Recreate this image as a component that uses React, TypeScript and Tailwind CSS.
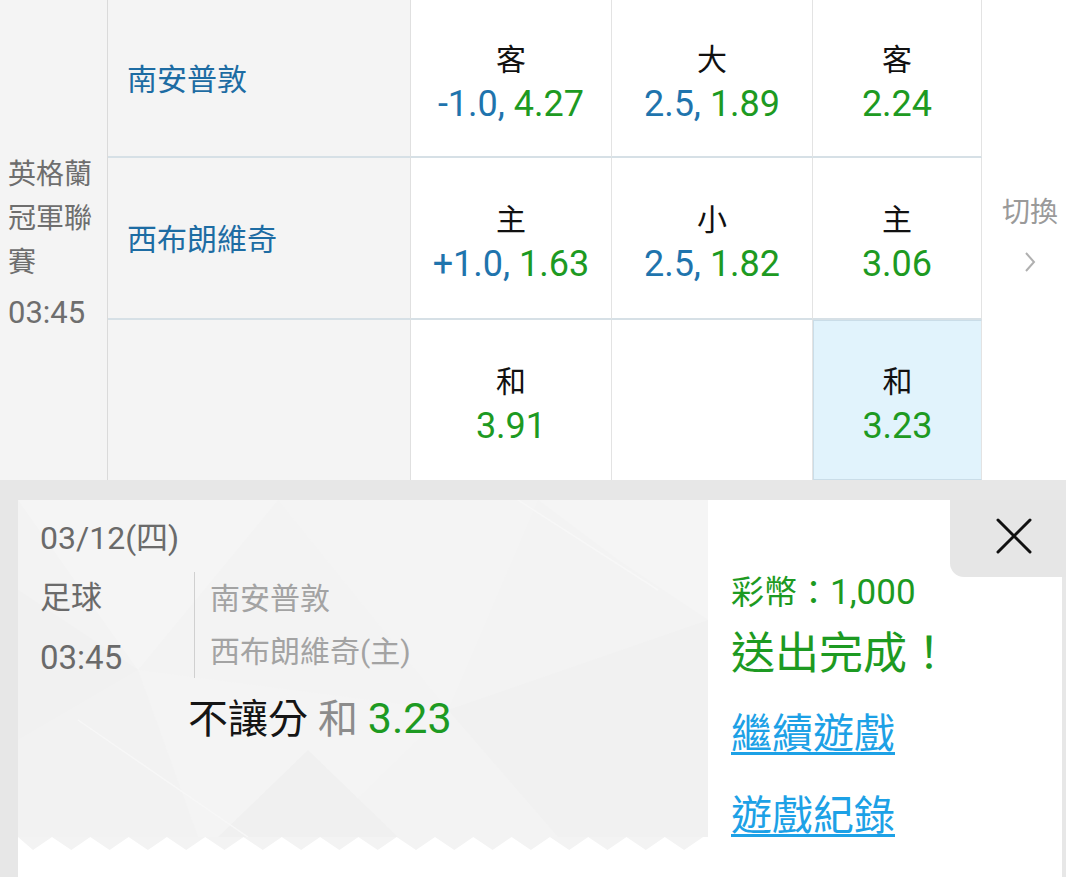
import React from "react";

const BLUE = "text-[#1f74ad]";
const GREEN = "text-[#1d9a22]";

function OddsCell({
  label,
  pre,
  val,
  className = "",
}: {
  label?: string;
  pre?: string;
  val?: string;
  className?: string;
}) {
  return (
    <div className={`flex flex-col items-center justify-center pt-[8px] border-r border-r-[#e3e3e3] ${className}`}>
      {label && <div className="text-[30px] leading-[44px] text-[#111]">{label}</div>}
      {val && (
        <div className="text-[36px] leading-[44px]">
          {pre && <span className={BLUE}>{pre} </span>}
          <span className={GREEN}>{val}</span>
        </div>
      )}
    </div>
  );
}

function Zigzag() {
  const pts: string[] = ["0,0"];
  const period = 38.3;
  for (let k = 0; k < 19; k++) {
    const v = 15 + period * k;
    const p = 34 + period * k;
    if (v <= 690) pts.push(`${v},13`);
    if (p <= 690) pts.push(`${p},0`);
  }
  pts.push("690,0");
  return (
    <svg width="690" height="14" viewBox="0 0 690 14" className="block">
      <rect x="0" y="0" width="690" height="14" fill="#ffffff" />
      <polygon points={pts.join(" ")} fill="#f3f3f3" />
    </svg>
  );
}

function TrianglePattern() {
  return (
    <svg className="absolute inset-0" width="690" height="337" viewBox="0 0 690 337">
      <polygon points="0,0 260,0 120,170" fill="#f5f5f5" />
      <polygon points="120,170 0,240 0,90" fill="#f1f1f1" />
      <polygon points="260,0 520,0 430,210" fill="#f4f4f4" />
      <polygon points="430,210 690,120 690,337 540,337" fill="#f1f1f1" />
      <polygon points="520,0 690,0 690,120 600,60" fill="#f5f5f5" />
      <polygon points="120,170 430,210 300,337 180,337" fill="#f4f4f4" />
      <polygon points="0,240 120,170 180,337 0,337" fill="#f2f2f2" />
      <polygon points="200,337 290,250 380,337" fill="#f0f0f0" />
      <line x1="60" y1="220" x2="230" y2="337" stroke="#f7f7f7" strokeWidth="1.5" />
      <line x1="500" y1="0" x2="640" y2="90" stroke="#f7f7f7" strokeWidth="1.5" />
    </svg>
  );
}

export default function App() {
  return (
    <div className="w-[1066px] h-[877px] overflow-hidden bg-white font-['Roboto','Noto_Sans_CJK_TC',sans-serif]">
      {/* Odds table */}
      <div className="grid grid-cols-[108px_303px_201px_201px_169px_84px] grid-rows-[158px_162px_160px]">
        <div className="row-span-3 bg-[#f4f4f4] border-r border-r-[#dadada] flex flex-col justify-center pl-[8px] pt-[12px] text-[28px] leading-[44px] text-[#6e6e6e]">
          <div>英格蘭</div>
          <div>冠軍聯</div>
          <div>賽</div>
          <div className="text-[31px] leading-[52px] mt-[2px]">03:45</div>
        </div>

        {/* Row 1 */}
        <div className="bg-[#f4f4f4] border-r border-r-[#e0e0e0] border-b-2 border-b-[#d6e0e6] flex items-center pl-[19px] pt-[2px] text-[30px] text-[#1d6ca3]">
          南安普敦
        </div>
        <OddsCell label="客" pre="-1.0," val="4.27" className="bg-white border-b-2 border-b-[#d6e0e6]" />
        <OddsCell label="大" pre="2.5," val="1.89" className="bg-white border-b-2 border-b-[#d6e0e6]" />
        <OddsCell label="客" val="2.24" className="bg-white border-b-2 border-b-[#d6e0e6]" />
        <div className="row-span-3 bg-white flex flex-col items-center justify-center pl-[12px] pb-[11px]">
          <div className="text-[28px] leading-[36px] text-[#9a9a9a]">切換</div>
          <svg width="14" height="24" viewBox="0 0 14 24" className="mt-[19px]">
            <polyline points="3,3 11,12 3,21" fill="none" stroke="#b0b0b0" strokeWidth="2" />
          </svg>
        </div>

        {/* Row 2 */}
        <div className="bg-[#f4f4f4] border-r border-r-[#e0e0e0] border-b-2 border-b-[#d6e0e6] flex items-center pl-[19px] pt-[2px] text-[30px] text-[#1d6ca3]">
          西布朗維奇
        </div>
        <OddsCell label="主" pre="+1.0," val="1.63" className="bg-white border-b-2 border-b-[#d6e0e6]" />
        <OddsCell label="小" pre="2.5," val="1.82" className="bg-white border-b-2 border-b-[#d6e0e6]" />
        <OddsCell label="主" val="3.06" className="bg-white border-b-2 border-b-[#d6e0e6]" />

        {/* Row 3 */}
        <div className="bg-[#f4f4f4] border-r border-r-[#e0e0e0]" />
        <OddsCell label="和" val="3.91" className="bg-white" />
        <div className="bg-white border-r border-r-[#e3e3e3]" />
        <OddsCell label="和" val="3.23" className="bg-[#e1f3fc] border border-[#cadde8]" />
      </div>

      {/* Bottom confirmation panel */}
      <div className="bg-[#e7e7e7] pt-[20px] pl-[18px] pr-[4px] h-[397px] flex">
        {/* Ticket */}
        <div className="w-[690px] flex flex-col">
          <div className="relative h-[337px] bg-[#f3f3f3] overflow-hidden">
            <TrianglePattern />
            <div className="relative pl-[22px] pt-[18px]">
              <div className="text-[32px] leading-[40px] text-[#6a6a6a]">03/12(四)</div>
              <div className="flex mt-[10px]">
                <div className="w-[154px] text-[31px] text-[#6a6a6a]">
                  <div className="h-[60px] leading-[60px]">足球</div>
                  <div className="h-[60px] leading-[60px] text-[33px]">03:45</div>
                </div>
                <div className="mt-[4px] h-[106px] border-l border-l-[#d0d0d0] pl-[15px] text-[30px] text-[#a3a3a3]">
                  <div className="h-[53px] leading-[53px]">南安普敦</div>
                  <div className="h-[53px] leading-[53px]">西布朗維奇(主)</div>
                </div>
              </div>
              <div className="pl-[148px] h-[60px] leading-[60px] text-[40px]">
                <span className="text-[#151515]">不讓分</span>
                <span className="text-[#8c8c8c]"> 和 </span>
                <span className={`text-[43px] ${GREEN}`}>3.23</span>
              </div>
            </div>
          </div>
          <Zigzag />
          <div className="flex-1 bg-white" />
        </div>

        {/* Right result area */}
        <div className="flex-1 bg-white relative">
          <div className="absolute right-[-4px] top-0 w-[116px] h-[77px] bg-[#e6e6e6] rounded-bl-[14px] flex items-center justify-center pl-[12px] pb-[6px]">
            <svg width="38" height="38" viewBox="0 0 38 38">
              <line x1="3" y1="3" x2="35" y2="35" stroke="#111" strokeWidth="3" strokeLinecap="round" />
              <line x1="35" y1="3" x2="3" y2="35" stroke="#111" strokeWidth="3" strokeLinecap="round" />
            </svg>
          </div>
          <div className="pl-[23px] pt-[70px] flex flex-col">
            <div className={`text-[33px] leading-[46px] ${GREEN}`}>
              彩幣：<span className="text-[35px]">1,000</span>
            </div>
            <div className={`text-[44px] leading-[60px] mt-[8px] ${GREEN}`}>送出完成！</div>
            <div className="mt-[22px] text-[41px] leading-[56px] text-[#1da1e6] underline decoration-[3px] underline-offset-[4px]">
              繼續遊戲
            </div>
            <div className="mt-[26px] text-[41px] leading-[56px] text-[#1da1e6] underline decoration-[3px] underline-offset-[4px]">
              遊戲紀錄
            </div>
          </div>
        </div>
      </div>
    </div>
  );
}
